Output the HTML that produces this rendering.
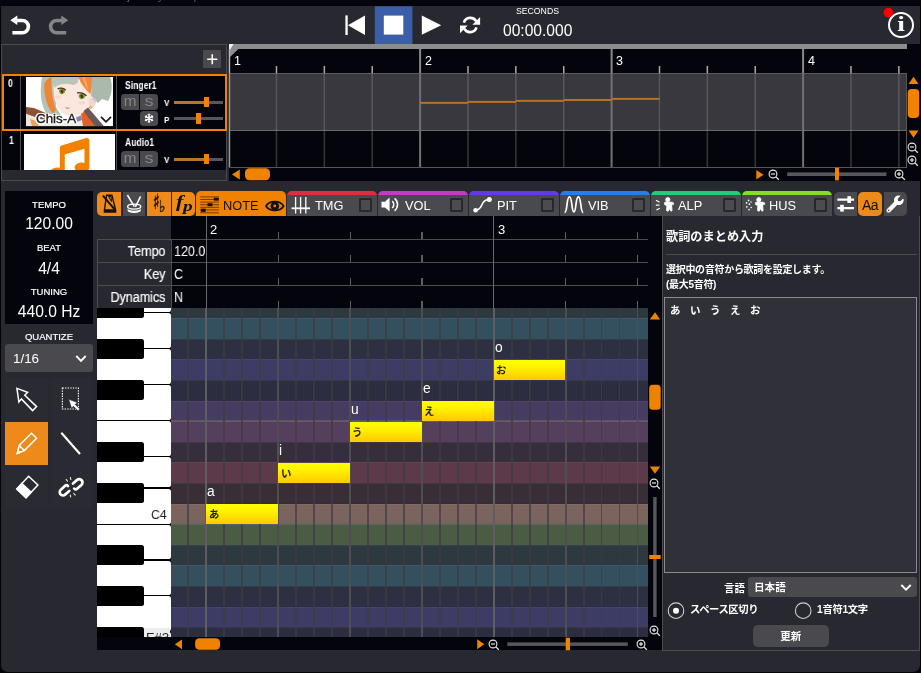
<!DOCTYPE html>
<html lang="ja"><head><meta charset="utf-8"><title>VoiSona</title><style>
*{box-sizing:border-box;margin:0;padding:0}
html,body{width:921px;height:673px;overflow:hidden;background:#030308;}
body{font-family:"Liberation Sans","Noto Sans CJK JP",sans-serif;color:#fff;position:relative}
.a{position:absolute}
.jp{font-family:"Liberation Sans","Noto Sans CJK JP",sans-serif;font-weight:700}
#win{left:1px;top:0;width:919px;height:671.5px;background:#282830;border-radius:0 0 7px 7px;overflow:hidden}
.t{position:absolute;white-space:nowrap;line-height:1;will-change:transform}
svg{position:absolute;overflow:visible}
</style></head><body>
<div id="win" class="a"></div>
<div class="a" style="left:0px;top:0px;width:921px;height:5.8px;background:#04040c;"></div>
<div class="t " style="left:14px;top:-9.5px;font-size:11.5px;color:#5a5a62;">VoiSona - Untitled Project - lyrics input</div>
<svg class="a" style="left:0;top:0" width="921" height="50" viewBox="0 0 921 50"><path d="M16,20.5 L22.3,20.5 A6.1,6.1 0 0 1 22.3,32.7 L12.4,32.7" fill="none" stroke="#fff" stroke-width="3.6"/><path d="M10.3,20.3 L17.3,15.4 L17.3,25 Z" fill="#fff"/><path d="M62.5,20.5 L56.7,20.5 A6.1,6.1 0 0 0 56.7,32.7 L66.2,32.7" fill="none" stroke="#858588" stroke-width="3.6"/><path d="M68.3,20.3 L61.3,15.4 L61.3,25 Z" fill="#858588"/><rect x="345.4" y="15.4" width="2.3" height="19.6" fill="#fff"/><path d="M365,15.4 L365,35 L347.9,25.2 Z" fill="#fff"/><rect x="374.8" y="6.3" width="37.6" height="37.9" fill="#3b5ea9"/><rect x="383.8" y="15.6" width="19.5" height="19" fill="#fff"/><path d="M421.8,15.5 L421.8,34.8 L441.2,25.2 Z" fill="#fff"/><g fill="none" stroke="#fff" stroke-width="2.6"><path d="M463.9,22.6 A6.7,6.7 0 0 1 476.2,21.4"/><path d="M476.5,27.4 A6.7,6.7 0 0 1 464.2,28.6"/></g><path d="M480.1,17 L480.1,24.8 L472.4,24.8 Z" fill="#fff"/><path d="M460,33.2 L460,25.4 L467.7,25.4 Z" fill="#fff"/><circle cx="901" cy="25" r="12" fill="none" stroke="#fff" stroke-width="2"/><circle cx="888.3" cy="12.6" r="4.8" fill="#f00"/></svg>
<div class="t " style="left:516px;top:6.6px;font-size:8.7px;color:#fff;">SECONDS</div>
<div class="t" style="left:891px;width:20px;text-align:center;top:13.9px;font-size:21.5px;font-weight:700;color:#fff;font-family:'Liberation Serif',serif;transform:scaleX(1.28)">i</div>
<div class="t " style="left:503px;top:22.8px;font-size:15.6px;color:#fff;">00:00.000</div>
<div class="a" style="left:1px;top:44.3px;width:226px;height:136.9px;background:#282830;border:1.2px solid #4a4a4e"></div>
<div class="a" style="left:202.5px;top:49.5px;width:18.5px;height:18.5px;background:#4a4a4e;"></div>
<svg class="a" style="left:202.5px;top:49.5px" width="18.5" height="18.5"><path d="M9.25,4.2 V14.3 M4.2,9.25 H14.3" stroke="#fff" stroke-width="1.6"/></svg>
<div class="a" style="left:2px;top:74px;width:224.5px;height:56.5px;background:#04040c;border:2px solid #f08200"></div>
<div class="a" style="left:20.3px;top:76px;width:1px;height:52.5px;background:#505054;"></div>
<div class="a" style="left:116.3px;top:76px;width:1px;height:52.5px;background:#505054;"></div>
<div class="t jp" style="left:8.4px;top:78.8px;font-size:10px;color:#fff;font-weight:700;transform:scaleX(0.86);transform-origin:0 0">0</div>
<svg class="a" style="left:26px;top:77px" width="87" height="49.3" viewBox="0 0 87 49.3">
<defs><clipPath id="pc"><rect x="0" y="0" width="87" height="49.3"/></clipPath>
<filter id="bl" x="-5%" y="-5%" width="110%" height="110%"><feGaussianBlur stdDeviation="0.45"/></filter></defs>
<g clip-path="url(#pc)"><rect width="87" height="49.3" fill="#fff"/>
<g filter="url(#bl)">
<path d="M16,0 L30,0 L30,30 L36,40 L20,36 C14,26 14,12 16,0 Z" fill="#b3c2b5"/>
<path d="M0,30 L8,31 L22,37 L30,43 L20,44 L0,37 Z" fill="#8a5236"/>
<path d="M0,37 L20,44 L30,43 L40,49.3 L0,49.3 Z" fill="#ece6de"/>
<path d="M4,42 L14,45 L12,49.3 L6,49.3 Z" fill="#f0a060"/>
<path d="M65,0 L84,0 C87,8 86,18 82,24 L76,22 L72,26 L64,18 Z" fill="#aab9ac"/>
<path d="M27,4 C34,2 58,2 65,8 C66,16 65,24 62,30 C56,38 50,42 45,41 C38,39 30,30 28,20 Z" fill="#fbe7de"/>
<path d="M18.5,6 C20,3 23,1 25.5,0 C25,10 26,22 30,33 L27,37 C20,28 17.5,16 18.5,6 Z" fill="#f08434"/>
<path d="M26,0 L53,0 L52,5 C50,8 47,8.5 45,7.5 C40,6 33,7 28.5,10.5 C27,8 26,4 26,0 Z" fill="#b9c7ba"/>
<path d="M52,0 L66,0 C66,6 65.5,12 64.5,17.5 C60,13 55,7 52,0 Z" fill="#f28a3e"/>
<path d="M56,0 L59,0 L62,12 L60,10 Z" fill="#f6a868"/>
<path d="M62.5,23 C64,19.5 69,20 70,23.5 C70.5,27 68,31 65,31.5 C63.5,30 62.5,26 62.5,23 Z" fill="#f5d6ca"/>
<path d="M67,20.5 L70.5,22.5 L69.5,25 L66.5,23 Z" fill="#cdbfe0"/>
<circle cx="64.3" cy="30.2" r="1.5" fill="#e8893a"/><circle cx="64.3" cy="30.2" r="0.6" fill="#fff"/>
<ellipse cx="36" cy="14.3" rx="2.9" ry="2.8" fill="#7e9a1c" transform="rotate(-25 36 14.3)"/>
<ellipse cx="55.8" cy="19.2" rx="3" ry="2.9" fill="#7e9a1c" transform="rotate(-25 55.8 19.2)"/>
<ellipse cx="36" cy="14.4" rx="1.2" ry="1.8" fill="#2c3a08" transform="rotate(-20 36 14.4)"/>
<ellipse cx="55.8" cy="19.3" rx="1.3" ry="1.9" fill="#2c3a08" transform="rotate(-20 55.8 19.3)"/>
<path d="M31.6,12 C34,10.6 37.6,11 39.8,13.2" stroke="#4e362a" stroke-width="1.4" fill="none"/>
<path d="M51.2,16 C54.4,15 58.4,16.4 60.4,19" stroke="#4e362a" stroke-width="1.4" fill="none"/>
<path d="M39.6,30.3 C40.8,31.4 42.4,31.5 43.4,30.8" stroke="#d68c84" stroke-width="1.2" fill="none"/>
<ellipse cx="32" cy="20" rx="3" ry="1.6" fill="#f8cfc6" opacity="0.7"/><ellipse cx="56" cy="26" rx="3.2" ry="1.7" fill="#f8cfc6" opacity="0.7"/>
<path d="M40,41 L47,40.5 L54,36 L58,38 L62,49.3 L36,49.3 Z" fill="#f3ece6"/>
<path d="M49,41 L55,38.5 L56,43 L51,45 Z" fill="#8088b0"/>
<path d="M55,37 L60,33 L70,49.3 L57,49.3 Z" fill="#e4602a"/>
<path d="M57.5,34 L62,30.5 L78,49.3 L69,49.3 Z" fill="#6a5a56"/>
</g></g></svg>
<div class="t" style="left:35.9px;top:112.3px;font-size:13.4px;color:#1c1c1c;-webkit-text-stroke:0.35px #1c1c1c;text-shadow:-1.2px -1.2px 0 #fff,1.2px -1.2px 0 #fff,-1.2px 1.2px 0 #fff,1.2px 1.2px 0 #fff,0 1.5px 0 #fff,0 -1.5px 0 #fff,1.5px 0 0 #fff,-1.5px 0 0 #fff,0 0 2px #fff">Chis-A</div>
<svg class="a" style="left:100px;top:115px" width="12" height="9"><path d="M1,1.8 L6,6.8 L11,1.8" fill="none" stroke="#fff" stroke-width="3.4"/><path d="M1,1.8 L6,6.8 L11,1.8" fill="none" stroke="#1c1c1c" stroke-width="1.8"/></svg>
<div class="t jp" style="left:125px;top:80.8px;font-size:10px;color:#fff;font-weight:700;transform:scaleX(0.86);transform-origin:0 0">Singer1</div>
<div class="a" style="left:121.2px;top:94.4px;width:18.2px;height:15.4px;background:#4a4a4e;border-radius:3.5px 0 0 3.5px"></div>
<div class="a" style="left:140.3px;top:94.4px;width:17.9px;height:15.4px;background:#4a4a4e;border-radius:0 3.5px 3.5px 0"></div>
<div class="t" style="left:121.2px;width:18.2px;text-align:center;top:94.3px;font-size:14.5px;color:#85858a;transform:scaleX(1.05)">m</div>
<div class="t" style="left:140.3px;width:17.9px;text-align:center;top:94.3px;font-size:14.5px;color:#85858a;transform:scaleX(1.25)">s</div>
<div class="t jp" style="left:163.6px;top:98.2px;font-size:9.5px;color:#fff;font-weight:700;transform:scaleX(0.86);transform-origin:0 0">V</div>
<div class="a" style="left:174px;top:100.7px;width:32px;height:3px;background:#b4762a;"></div>
<div class="a" style="left:206px;top:100.7px;width:17px;height:3px;background:#58585c;"></div>
<div class="a" style="left:204.1px;top:96.9px;width:4.8px;height:10.4px;background:#f08200;"></div>
<div class="a" style="left:140.2px;top:111.2px;width:18px;height:14.5px;background:#4a4a4e;border-radius:3.5px"></div>
<svg class="a" style="left:140.2px;top:111.2px" width="18" height="14.5"><g stroke="#fff" stroke-width="1.5" stroke-linecap="round"><path d="M9,3.3 V11.3 M5.5,5.3 L12.5,9.3 M5.5,9.3 L12.5,5.3"/></g><g stroke="#fff" stroke-width="0.9" fill="none"><path d="M7.8,3.4 L9,4.6 L10.2,3.4 M7.8,11.2 L9,10 L10.2,11.2 M5,6.6 L6.7,6 L6.4,4.3 M13,8 L11.3,8.6 L11.6,10.3 M5,8 L6.7,8.6 L6.4,10.3 M13,6.6 L11.3,6 L11.6,4.3"/></g></svg>
<div class="t jp" style="left:163.6px;top:114.7px;font-size:9.5px;color:#fff;font-weight:700;transform:scaleX(0.86);transform-origin:0 0">P</div>
<div class="a" style="left:174px;top:117.3px;width:49px;height:3px;background:#58585c;"></div>
<div class="a" style="left:196.2px;top:113.4px;width:4.8px;height:10.3px;background:#f08200;"></div>
<div class="a" style="left:2px;top:131px;width:224px;height:38.7px;background:#04040c;"></div>
<div class="a" style="left:20.3px;top:131px;width:1px;height:38.7px;background:#505054;"></div>
<div class="a" style="left:116.3px;top:131px;width:1px;height:38.7px;background:#505054;"></div>
<div class="t jp" style="left:8.6px;top:136.2px;font-size:10px;color:#fff;font-weight:700;transform:scaleX(0.86);transform-origin:0 0">1</div>
<div class="a" style="left:23.8px;top:133.8px;width:91.3px;height:35.9px;background:#fff;overflow:hidden"><svg style="left:26.4px;top:4.6px" width="39.4" height="39.4" viewBox="0 0 512 512"><path fill="#f08200" d="M470.38 1.51L150.41 96A32 32 0 0 0 128 126.51v261.41A139 139 0 0 0 96 384c-53 0-96 28.66-96 64s43 64 96 64 96-28.66 96-64V214.32l256-75v184.61a138.4 138.4 0 0 0-32-3.93c-53 0-96 28.66-96 64s43 64 96 64 96-28.65 96-64V32a32 32 0 0 0-41.62-30.49z"/></svg></div>
<div class="t jp" style="left:125px;top:137.8px;font-size:10px;color:#fff;font-weight:700;transform:scaleX(0.86);transform-origin:0 0">Audio1</div>
<div class="a" style="left:121.2px;top:151.4px;width:18.2px;height:15.4px;background:#4a4a4e;border-radius:3.5px 0 0 3.5px"></div>
<div class="a" style="left:140.3px;top:151.4px;width:17.9px;height:15.4px;background:#4a4a4e;border-radius:0 3.5px 3.5px 0"></div>
<div class="t" style="left:121.2px;width:18.2px;text-align:center;top:151.3px;font-size:14.5px;color:#85858a;transform:scaleX(1.05)">m</div>
<div class="t" style="left:140.3px;width:17.9px;text-align:center;top:151.3px;font-size:14.5px;color:#85858a;transform:scaleX(1.25)">s</div>
<div class="t jp" style="left:163.6px;top:155.2px;font-size:9.5px;color:#fff;font-weight:700;transform:scaleX(0.86);transform-origin:0 0">V</div>
<div class="a" style="left:174px;top:157.7px;width:32px;height:3px;background:#b4762a;"></div>
<div class="a" style="left:206px;top:157.7px;width:17px;height:3px;background:#58585c;"></div>
<div class="a" style="left:204.1px;top:153.9px;width:4.8px;height:10.4px;background:#f08200;"></div>
<div class="a" style="left:229px;top:44.3px;width:691px;height:136.9px;background:#04040c;"></div>
<div class="a" style="left:229px;top:44.3px;width:678px;height:4.8px;background:#8c8c8c;"></div>
<svg class="a" style="left:229px;top:44px" width="10" height="14"><path d="M0,5 L9.5,5 L0,14 Z" fill="#8c8c8c"/><path d="M0,0 L4.6,0 L0,7.6 Z" fill="#f0f0f0"/></svg>
<div class="a" style="left:229px;top:73px;width:678px;height:57.5px;background:#38383e;"></div>
<div class="a" style="left:229px;top:73px;width:678px;height:1px;background:#5c5c60;"></div>
<div class="a" style="left:229px;top:130px;width:678px;height:1px;background:#6a6a6e;"></div>
<div class="a" style="left:229px;top:166.5px;width:678px;height:1px;background:#55555a;"></div>
<div class="a" style="left:906.3px;top:73px;width:1px;height:94px;background:#55555a;"></div>
<div class="t " style="left:233.6px;top:54.8px;font-size:12.5px;color:#fff;">1</div>
<div class="t " style="left:424.70000000000005px;top:54.8px;font-size:12.5px;color:#fff;">2</div>
<div class="t " style="left:616.2px;top:54.8px;font-size:12.5px;color:#fff;">3</div>
<div class="t " style="left:807.7px;top:54.8px;font-size:12.5px;color:#fff;">4</div>
<svg class="a" style="left:0;top:0" width="921" height="182" viewBox="0 0 921 182"><rect x="228.8" y="49" width="1.4" height="24" fill="#b8b8b8"/><rect x="228.8" y="73" width="1.4" height="94" fill="#9a9a9e"/><rect x="275.73" y="73" width="1.5" height="94" fill="rgba(150,150,150,0.34)"/><rect x="275.73" y="66" width="1.5" height="7" fill="#aaaaaa"/><rect x="323.60" y="73" width="1.5" height="94" fill="rgba(150,150,150,0.34)"/><rect x="323.60" y="66" width="1.5" height="7" fill="#aaaaaa"/><rect x="371.48" y="73" width="1.5" height="94" fill="rgba(150,150,150,0.34)"/><rect x="371.48" y="66" width="1.5" height="7" fill="#aaaaaa"/><rect x="419.10" y="49" width="2" height="24" fill="#88888c"/><rect x="419.10" y="73" width="2" height="94" fill="#717175"/><rect x="467.23" y="73" width="1.5" height="94" fill="rgba(150,150,150,0.34)"/><rect x="467.23" y="66" width="1.5" height="7" fill="#aaaaaa"/><rect x="515.10" y="73" width="1.5" height="94" fill="rgba(150,150,150,0.34)"/><rect x="515.10" y="66" width="1.5" height="7" fill="#aaaaaa"/><rect x="562.98" y="73" width="1.5" height="94" fill="rgba(150,150,150,0.34)"/><rect x="562.98" y="66" width="1.5" height="7" fill="#aaaaaa"/><rect x="610.60" y="49" width="2" height="24" fill="#88888c"/><rect x="610.60" y="73" width="2" height="94" fill="#717175"/><rect x="658.73" y="73" width="1.5" height="94" fill="rgba(150,150,150,0.34)"/><rect x="658.73" y="66" width="1.5" height="7" fill="#aaaaaa"/><rect x="706.60" y="73" width="1.5" height="94" fill="rgba(150,150,150,0.34)"/><rect x="706.60" y="66" width="1.5" height="7" fill="#aaaaaa"/><rect x="754.48" y="73" width="1.5" height="94" fill="rgba(150,150,150,0.34)"/><rect x="754.48" y="66" width="1.5" height="7" fill="#aaaaaa"/><rect x="802.10" y="49" width="2" height="24" fill="#88888c"/><rect x="802.10" y="73" width="2" height="94" fill="#717175"/><rect x="850.23" y="73" width="1.5" height="94" fill="rgba(150,150,150,0.34)"/><rect x="850.23" y="66" width="1.5" height="7" fill="#aaaaaa"/><rect x="898.10" y="73" width="1.5" height="94" fill="rgba(150,150,150,0.34)"/><rect x="898.10" y="66" width="1.5" height="7" fill="#aaaaaa"/><rect x="420.1" y="101.85" width="47.9" height="2" fill="#b97222"/><rect x="468" y="100.90" width="47.9" height="2" fill="#b97222"/><rect x="515.85" y="99.85" width="47.9" height="2" fill="#b97222"/><rect x="563.7" y="99.00" width="47.9" height="2" fill="#b97222"/><rect x="611.6" y="97.90" width="47.9" height="2" fill="#b97222"/></svg>
<svg class="a" style="left:907px;top:70px" width="14" height="100"><path d="M1.6,14 L11.5,14 L6.5,6.7 Z" fill="#f08200"/><rect x="0.7" y="19" width="11.5" height="29" rx="4" fill="#f08200"/><path d="M1.6,60.4 L11.5,60.4 L6.5,67.7 Z" fill="#f08200"/></svg>
<svg class="a" style="left:906.3px;top:140.7px" width="14" height="14"><circle cx="6" cy="6" r="3.9" fill="none" stroke="#e8e8e8" stroke-width="1.1"/><path d="M8.9,8.9 L11.8,11.8" stroke="#e8e8e8" stroke-width="1.3"/><path d="M4,6 H8" stroke="#e8e8e8" stroke-width="1.2"/></svg>
<svg class="a" style="left:906.3px;top:154.4px" width="14" height="14"><circle cx="6" cy="6" r="3.9" fill="none" stroke="#e8e8e8" stroke-width="1.1"/><path d="M8.9,8.9 L11.8,11.8" stroke="#e8e8e8" stroke-width="1.3"/><path d="M4,6 H8" stroke="#e8e8e8" stroke-width="1.2"/><path d="M6,4 V8" stroke="#e8e8e8" stroke-width="1.2"/></svg>
<svg class="a" style="left:229px;top:167px" width="692" height="14"><path d="M10.8,2.5 L10.8,12.5 L3,7.5 Z" fill="#f08200"/><rect x="16" y="1.3" width="25" height="12" rx="4.5" fill="#f08200"/><path d="M527.3,3 L527.3,12.5 L534.6,7.7 Z" fill="#f08200"/><rect x="558.2" y="5.4" width="99.2" height="3.6" fill="#58585c"/><rect x="606" y="0.8" width="4" height="12.6" fill="#f08200"/></svg>
<svg class="a" style="left:766.8px;top:167.5px" width="14" height="14"><circle cx="6" cy="6" r="3.9" fill="none" stroke="#e8e8e8" stroke-width="1.1"/><path d="M8.9,8.9 L11.8,11.8" stroke="#e8e8e8" stroke-width="1.3"/><path d="M4,6 H8" stroke="#e8e8e8" stroke-width="1.2"/></svg>
<svg class="a" style="left:892.6px;top:167.5px" width="14" height="14"><circle cx="6" cy="6" r="3.9" fill="none" stroke="#e8e8e8" stroke-width="1.1"/><path d="M8.9,8.9 L11.8,11.8" stroke="#e8e8e8" stroke-width="1.3"/><path d="M4,6 H8" stroke="#e8e8e8" stroke-width="1.2"/><path d="M6,4 V8" stroke="#e8e8e8" stroke-width="1.2"/></svg>
<div class="a" style="left:5px;top:191.3px;width:88px;height:132.3px;background:#04040c;"></div>
<div class="t " style="left:-51px;width:200px;text-align:center;top:199.8px;font-size:9.5px;color:#fff;-webkit-text-stroke:0.2px #fff">TEMPO</div>
<div class="t " style="left:-50.7px;width:200px;text-align:center;top:216px;font-size:15.6px;color:#fff;">120.00</div>
<div class="t " style="left:-51px;width:200px;text-align:center;top:243.4px;font-size:9.5px;color:#fff;-webkit-text-stroke:0.2px #fff">BEAT</div>
<div class="t " style="left:-51px;width:200px;text-align:center;top:261px;font-size:15.6px;color:#fff;">4/4</div>
<div class="t " style="left:-51px;width:200px;text-align:center;top:287.4px;font-size:9.5px;color:#fff;-webkit-text-stroke:0.2px #fff">TUNING</div>
<div class="t " style="left:-51px;width:200px;text-align:center;top:304px;font-size:15.6px;color:#fff;">440.0 Hz</div>
<div class="t " style="left:-51px;width:200px;text-align:center;top:331.8px;font-size:9.5px;color:#fff;-webkit-text-stroke:0.2px #fff">QUANTIZE</div>
<div class="a" style="left:5px;top:344.4px;width:87.7px;height:27.6px;background:#4a4a4e;border-radius:3px"></div>
<div class="t " style="left:12.5px;top:352px;font-size:13.4px;color:#fff;">1/16</div>
<svg class="a" style="left:75px;top:354px" width="12" height="10"><path d="M1.3,2 L6,6.8 L10.7,2" fill="none" stroke="#fff" stroke-width="1.9"/></svg>
<div class="a" style="left:5.3px;top:378px;width:86.8px;height:130.2px;background:#2a2a32;"></div>
<div class="a" style="left:5.4px;top:421.7px;width:43.1px;height:43.1px;background:#ee8a1a;"></div>
<div class="a" style="left:48.5px;top:378px;width:0.8px;height:130px;background:#26262e;"></div>
<svg class="a" style="left:0;top:370px" width="100" height="145" viewBox="0 0 100 145">
<g fill="none" stroke="#fff" stroke-width="1.5" stroke-linejoin="miter">
<path d="M16.9,18.4 L27.6,22.2 L24.8,25.2 L36.6,36.6 L32.6,40.6 L21.4,28.9 L18.9,32 Z"/>
<path d="M62.4,18 H78.4 V39 H62.4 Z" stroke-dasharray="1.4 1.2" stroke-width="1.2"/>
</g>
<path d="M68.7,29.3 L77.4,32.5 L75.2,34.4 L79.8,39 L78,40.8 L73.4,36.2 L71.6,38.4 Z" fill="#fff" stroke="#282830" stroke-width="0.6"/>
<g fill="none" stroke="#fff" stroke-width="1.5">
<path d="M17.2,83.5 L19.2,75.5 L31.5,63.2 L36.6,68.3 L24.3,80.6 Z"/>
<path d="M19.2,75.5 L24.3,80.6"/>
<path d="M17.2,83.5 L20.5,82.5 L18.3,80.2 Z" fill="#fff" stroke-width="0.8"/>
</g>
<path d="M61.3,62.8 L80,84" stroke="#fff" stroke-width="2.1"/>
<g fill="none" stroke="#fff" stroke-width="1.5">
<path d="M16.8,119 L28.6,106.3 L37.9,115 L26,127.8 Z"/>
</g>
<path d="M16.8,119 L21.9,113.5 L31.2,122.2 L26,127.8 Z" fill="#fff" stroke="#fff" stroke-width="1.5"/>
<g fill="none" stroke="#fff" stroke-width="2.7" stroke-linecap="round">
<path transform="translate(65.4,120) rotate(-42)" d="M4.6,-1.2 Q4.6,-3.3 2.6,-3.3 L-3.2,-3.3 A3.3,3.3 0 0 0 -3.2,3.3 L2.2,3.3"/>
<path transform="translate(76.8,114.6) rotate(-42)" d="M-4.6,1.2 Q-4.6,3.3 -2.6,3.3 L3.2,3.3 A3.3,3.3 0 0 0 3.2,-3.3 L-2.2,-3.3"/>
</g>
<g stroke="#e8e8e8" stroke-width="1.1"><path d="M65.9,109.1 L67.8,111.3 M70.4,107.2 L70.8,110 M70.2,124.7 L70.7,127.4 M73.4,123.1 L75.6,125.3"/></g>
</svg>
<div class="a" style="left:97px;top:191.6px;width:24.2px;height:24.4px;background:#ee8a1a;border-radius:5px 0 0 5px"></div>
<div class="a" style="left:122.6px;top:191.6px;width:22.8px;height:24.4px;background:#4a4a4e;"></div>
<div class="a" style="left:146.8px;top:191.6px;width:24px;height:24.4px;background:#ee8a1a;"></div>
<div class="a" style="left:172px;top:191.6px;width:23.3px;height:24.4px;background:#ee8a1a;border-radius:0 5px 5px 0"></div>
<svg class="a" style="left:95px;top:188px" width="105" height="32" viewBox="0 0 105 32">
<g fill="none" stroke="#111" stroke-width="1.4">
<path d="M11.6,7.2 H16.9 L20.6,22 H9.4 Z"/>
<path d="M7.9,7.6 L19.4,21.2" stroke-width="1.9"/>
<path d="M13.6,8.6 H16 L16.6,13.6 Z" stroke-width="1"/>
</g>
<path d="M9.2,22 H20.8 L21.5,24.8 H8.5 Z" fill="#111"/>
<g stroke="#fff" stroke-width="1.5" fill="none"><path d="M32.4,7 L39.3,18.6 M45.6,8.4 L40.4,18.8"/></g>
<ellipse cx="39.2" cy="18.6" rx="6.6" ry="2.5" fill="none" stroke="#fff" stroke-width="1.3"/>
<path d="M32.6,20.2 V22.4 A6.6,2.5 0 0 0 45.8,22.4 V20.2 A6.6,2.5 0 0 1 32.6,20.2 Z" fill="#fff"/>
</svg>
<div class="t " style="left:152.9px;top:191.6px;font-size:21px;color:#111;font-family:'DejaVu Sans',sans-serif;-webkit-text-stroke:0.5px #111;transform:scaleX(0.66);transform-origin:0 0">♯</div>
<div class="t " style="left:159.2px;top:199.4px;font-size:16.5px;color:#111;font-family:'DejaVu Sans',sans-serif;-webkit-text-stroke:0.4px #111;transform:scaleX(0.85);transform-origin:0 0">♭</div>
<div class="t " style="left:175.6px;top:192.6px;font-size:17px;color:#111;font-family:'Liberation Serif',serif;font-weight:700;transform:scaleX(1.3);transform-origin:0 0"><i>f</i></div>
<div class="t " style="left:182.6px;top:198.8px;font-size:14.8px;color:#111;font-family:'Liberation Serif',serif;font-weight:700;transform:scaleX(1.3);transform-origin:0 0"><i>p</i></div>
<div class="a" style="left:196.2px;top:191.2px;width:90.2px;height:24.8px;background:#f08200;border-radius:5px 5px 0 0"></div>
<svg class="a" style="left:200px;top:196px" width="20" height="18" viewBox="0 0 20 18">
<g stroke="rgba(70,32,0,0.72)" stroke-width="1"><path d="M0.2,0.9 H19 M0.2,3.5 H19 M0.2,6.1 H19 M0.2,8.7 H19 M0.2,11.3 H19 M0.2,13.9 H19 M0.2,16.8 H19"/></g>
<rect x="13.8" y="1.7" width="4.9" height="2.9" fill="#111"/>
<rect x="7.5" y="7.2" width="4.9" height="3" fill="#111"/>
<rect x="0.8" y="12.7" width="4.9" height="3.2" fill="#111"/>
</svg>
<div class="t " style="left:223.2px;top:199.9px;font-size:12.8px;color:#111;">NOTE</div>
<svg class="a" style="left:265px;top:198.6px" width="20" height="14" viewBox="0 0 20 14">
<path d="M1,7 C4.4,1.2 15.2,1.2 18.6,7 C15.2,12.8 4.4,12.8 1,7 Z" fill="none" stroke="#111" stroke-width="1.7"/>
<circle cx="9.8" cy="7" r="4.3" fill="#111"/><circle cx="9.8" cy="7" r="1.4" fill="#f08200"/>
</svg>
<div class="a" style="left:287px;top:191.2px;width:90px;height:24.8px;background:#4a4a4e;border-radius:5px 5px 0 0;overflow:hidden"><div style="height:3.8px;background:#e22c3c"></div></div>
<div class="a" style="left:359px;top:198.4px;width:13.2px;height:13.2px;background:#4c4c50;border:2px solid #28282c;border-radius:1.5px"></div>
<div class="t " style="left:314.6px;top:199.9px;font-size:12.8px;color:#fff;">TMG</div>
<div class="a" style="left:378px;top:191.2px;width:90px;height:24.8px;background:#4a4a4e;border-radius:5px 5px 0 0;overflow:hidden"><div style="height:3.8px;background:#c03cc4"></div></div>
<div class="a" style="left:450px;top:198.4px;width:13.2px;height:13.2px;background:#4c4c50;border:2px solid #28282c;border-radius:1.5px"></div>
<div class="t " style="left:405.2px;top:199.9px;font-size:12.8px;color:#fff;">VOL</div>
<div class="a" style="left:469px;top:191.2px;width:90px;height:24.8px;background:#4a4a4e;border-radius:5px 5px 0 0;overflow:hidden"><div style="height:3.8px;background:#6438f0"></div></div>
<div class="a" style="left:541px;top:198.4px;width:13.2px;height:13.2px;background:#4c4c50;border:2px solid #28282c;border-radius:1.5px"></div>
<div class="t " style="left:496.6px;top:199.9px;font-size:12.8px;color:#fff;">PIT</div>
<div class="a" style="left:560px;top:191.2px;width:90px;height:24.8px;background:#4a4a4e;border-radius:5px 5px 0 0;overflow:hidden"><div style="height:3.8px;background:#2a7ce8"></div></div>
<div class="a" style="left:632px;top:198.4px;width:13.2px;height:13.2px;background:#4c4c50;border:2px solid #28282c;border-radius:1.5px"></div>
<div class="t " style="left:587.6px;top:199.9px;font-size:12.8px;color:#fff;">VIB</div>
<div class="a" style="left:651px;top:191.2px;width:90px;height:24.8px;background:#4a4a4e;border-radius:5px 5px 0 0;overflow:hidden"><div style="height:3.8px;background:#1fce7c"></div></div>
<div class="a" style="left:723px;top:198.4px;width:13.2px;height:13.2px;background:#4c4c50;border:2px solid #28282c;border-radius:1.5px"></div>
<div class="t " style="left:678px;top:199.9px;font-size:12.8px;color:#fff;">ALP</div>
<div class="a" style="left:742px;top:191.2px;width:90px;height:24.8px;background:#4a4a4e;border-radius:5px 5px 0 0;overflow:hidden"><div style="height:3.8px;background:#86de20"></div></div>
<div class="a" style="left:814px;top:198.4px;width:13.2px;height:13.2px;background:#4c4c50;border:2px solid #28282c;border-radius:1.5px"></div>
<div class="t " style="left:769px;top:199.9px;font-size:12.8px;color:#fff;">HUS</div>
<svg class="a" style="left:287px;top:191px" width="560" height="26" viewBox="0 0 560 26">
<g stroke="#fff" stroke-width="1.3" fill="none">
<path d="M8.6,6 V22.4 M13.6,6 V22.4 M18.8,6 V22.4"/><path d="M4.6,17.3 H23" stroke-width="1.8"/>
</g>
<path d="M94.5,10.8 H98 L102.6,6.6 V20.6 L98,16.4 H94.5 Z" fill="#fff"/>
<g stroke="#fff" stroke-width="1.5" fill="none"><path d="M105.2,10.2 A4.4,4.4 0 0 1 105.2,17"/><path d="M107.6,7.4 A8,8 0 0 1 107.6,19.8"/></g>
<g stroke="#fff" stroke-width="1.5" fill="none"><path d="M188.6,19.2 C196.5,19.2 193,8.6 202,8.6"/></g>
<circle cx="188.6" cy="19.2" r="2.3" fill="#fff"/><circle cx="202.3" cy="8.6" r="2.5" fill="#fff"/>
<path d="M277.6,21.6 C280.6,21.6 279.4,5.8 282.4,5.8 C285.4,5.8 284.4,20.8 286.9,20.8 C289.4,20.8 288.4,5.8 291.4,5.8 C294.4,5.8 293.2,21.6 296.2,21.6" fill="none" stroke="#fff" stroke-width="1.7"/>
<g fill="#fff" stroke="#fff" stroke-width="0.9" stroke-linejoin="round" transform="translate(0,0)">
<circle cx="380.8" cy="8.7" r="2.1"/>
<path d="M377.4,12.6 Q377.2,11 379,11 L385.4,11.3 Q387,11.6 386.7,13.2 L384.6,13.9 L385,19.4 Q384.8,20.3 383.8,20.1 L382.5,17.4 L381.3,20.1 Q380.1,20.4 379.6,19.4 L379.9,14.3 L377.9,13.9 Z"/>
</g><g fill="#fff" stroke="#fff" stroke-width="0.9" stroke-linejoin="round" transform="translate(91,0)">
<circle cx="380.8" cy="8.7" r="2.1"/>
<path d="M377.4,12.6 Q377.2,11 379,11 L385.4,11.3 Q387,11.6 386.7,13.2 L384.6,13.9 L385,19.4 Q384.8,20.3 383.8,20.1 L382.5,17.4 L381.3,20.1 Q380.1,20.4 379.6,19.4 L379.9,14.3 L377.9,13.9 Z"/>
</g>
<g stroke="#fff" stroke-width="1.2" fill="none"><path d="M369,9.2 L372.6,11.2 M368.8,14.2 H372.4 M369.4,19 L372.8,17.2"/></g>
<g fill="#fff"><circle cx="461.6" cy="9.4" r="0.85"/><circle cx="459.6" cy="11.8" r="0.85"/><circle cx="462.4" cy="13.2" r="0.85"/><circle cx="459.8" cy="15.8" r="0.85"/><circle cx="462" cy="18.6" r="0.85"/><circle cx="464" cy="11" r="0.75"/><circle cx="464.2" cy="16.4" r="0.75"/></g>
</svg>
<div class="a" style="left:833.6px;top:192px;width:23.6px;height:23.8px;background:#4a4a4e;border-radius:5px 0 0 5px"></div>
<div class="a" style="left:858.4px;top:192px;width:24px;height:23.8px;background:#ee8a1a;border-radius:5px"></div>
<div class="a" style="left:883.6px;top:192px;width:23.2px;height:23.8px;background:#4a4a4e;border-radius:0 5px 5px 0"></div>
<svg class="a" style="left:833px;top:192px" width="75" height="24" viewBox="0 0 75 24">
<g stroke="#fff" stroke-width="2.2"><path d="M4.4,7.6 H21 M4.4,16.2 H21"/></g>
<rect x="14.4" y="4.2" width="3.6" height="6.8" fill="#fff"/><rect x="7.2" y="12.8" width="3.6" height="6.8" fill="#fff"/>
<g transform="translate(53.5,3.4) scale(0.0335)"><path fill="#fff" d="M507.73 109.1c-2.24-9.03-13.54-12.09-20.12-5.51l-74.36 74.36-67.88-11.31-11.31-67.88 74.36-74.36c6.62-6.62 3.43-17.9-5.66-20.16-47.38-11.74-99.55.91-136.58 37.93-39.64 39.64-50.55 97.1-34.05 147.2L18.74 402.76c-24.99 24.99-24.99 65.51 0 90.5 24.99 24.99 65.51 24.99 90.5 0l213.21-213.21c50.12 16.71 107.47 5.68 147.37-34.22 37.07-37.07 49.7-89.32 37.91-136.73zM64 472c-13.25 0-24-10.75-24-24 0-13.26 10.75-24 24-24s24 10.74 24 24c0 13.25-10.75 24-24 24z"/></g>
</svg>
<div class="t " style="left:862.3px;top:197.8px;font-size:14px;color:#111;letter-spacing:-0.5px">Aa</div>
<div class="a" style="left:171px;top:216px;width:491px;height:434.4px;background:#04040c;"></div>
<div class="a" style="left:97px;top:308px;width:74px;height:342.4px;background:#04040c;"></div>
<div class="a" style="left:97px;top:239.3px;width:551.2px;height:1px;background:#4c4c52;"></div>
<div class="a" style="left:97px;top:262.2px;width:551.2px;height:1px;background:#4c4c52;"></div>
<div class="a" style="left:97px;top:285px;width:551.2px;height:1px;background:#4c4c52;"></div>
<div class="a" style="left:97px;top:307.6px;width:551.2px;height:1px;background:#4c4c52;"></div>
<div class="a" style="left:97px;top:239.3px;width:1px;height:69px;background:#4c4c52;"></div>
<div class="a" style="left:170.6px;top:239.3px;width:1px;height:69px;background:#4c4c52;"></div>
<div class="t" style="left:77px;width:88.5px;text-align:right;top:245px;font-size:13.8px;color:#fff;-webkit-text-stroke:0.2px #fff;transform:scaleX(0.91);transform-origin:100% 0">Tempo</div>
<div class="t" style="left:77px;width:88.5px;text-align:right;top:267.8px;font-size:13.8px;color:#fff;-webkit-text-stroke:0.2px #fff;transform:scaleX(0.91);transform-origin:100% 0">Key</div>
<div class="t" style="left:77px;width:88.5px;text-align:right;top:290.6px;font-size:13.8px;color:#fff;-webkit-text-stroke:0.2px #fff;transform:scaleX(0.91);transform-origin:100% 0">Dynamics</div>
<div class="t " style="left:173.6px;top:245px;font-size:13.8px;color:#fff;transform:scaleX(0.91);transform-origin:0 0">120.0</div>
<div class="t " style="left:173.6px;top:267.8px;font-size:13.8px;color:#fff;transform:scaleX(0.91);transform-origin:0 0">C</div>
<div class="t " style="left:173.6px;top:290.6px;font-size:13.8px;color:#fff;transform:scaleX(0.91);transform-origin:0 0">N</div>
<div class="t " style="left:210px;top:223.2px;font-size:13px;color:#fff;">2</div>
<div class="t " style="left:498px;top:223.2px;font-size:13px;color:#fff;">3</div>
<div class="a" style="left:205.7px;top:216px;width:1.4px;height:92px;background:#6a6a6e;"></div>
<div class="a" style="left:277.7px;top:232.4px;width:1.2px;height:7px;background:#5e5e62;"></div>
<div class="a" style="left:277.7px;top:255.4px;width:1.2px;height:7px;background:#5e5e62;"></div>
<div class="a" style="left:277.7px;top:278.2px;width:1.2px;height:7px;background:#5e5e62;"></div>
<div class="a" style="left:277.7px;top:301px;width:1.2px;height:7px;background:#5e5e62;"></div>
<div class="a" style="left:349.5px;top:232.4px;width:1.2px;height:7px;background:#5e5e62;"></div>
<div class="a" style="left:349.5px;top:255.4px;width:1.2px;height:7px;background:#5e5e62;"></div>
<div class="a" style="left:349.5px;top:278.2px;width:1.2px;height:7px;background:#5e5e62;"></div>
<div class="a" style="left:349.5px;top:301px;width:1.2px;height:7px;background:#5e5e62;"></div>
<div class="a" style="left:421.4px;top:232.4px;width:1.2px;height:7px;background:#5e5e62;"></div>
<div class="a" style="left:421.4px;top:255.4px;width:1.2px;height:7px;background:#5e5e62;"></div>
<div class="a" style="left:421.4px;top:278.2px;width:1.2px;height:7px;background:#5e5e62;"></div>
<div class="a" style="left:421.4px;top:301px;width:1.2px;height:7px;background:#5e5e62;"></div>
<div class="a" style="left:493.1px;top:216px;width:1.4px;height:92px;background:#6a6a6e;"></div>
<div class="a" style="left:565.1px;top:232.4px;width:1.2px;height:7px;background:#5e5e62;"></div>
<div class="a" style="left:565.1px;top:255.4px;width:1.2px;height:7px;background:#5e5e62;"></div>
<div class="a" style="left:565.1px;top:278.2px;width:1.2px;height:7px;background:#5e5e62;"></div>
<div class="a" style="left:565.1px;top:301px;width:1.2px;height:7px;background:#5e5e62;"></div>
<div class="a" style="left:637.0px;top:232.4px;width:1.2px;height:7px;background:#5e5e62;"></div>
<div class="a" style="left:637.0px;top:255.4px;width:1.2px;height:7px;background:#5e5e62;"></div>
<div class="a" style="left:637.0px;top:278.2px;width:1.2px;height:7px;background:#5e5e62;"></div>
<div class="a" style="left:637.0px;top:301px;width:1.2px;height:7px;background:#5e5e62;"></div>
<div class="a" style="left:171px;top:308px;width:477.20000000000005px;height:329.3px;overflow:hidden;background:#2c2e40">
<div class="a" style="left:0;top:339.7px;width:100%;height:20.6px;background:#463c62;border-top:1px solid rgba(255,255,255,0.05)"></div>
<div class="a" style="left:0;top:319.1px;width:100%;height:20.6px;background:#2c2e40;border-top:1px solid rgba(255,255,255,0.05)"></div>
<div class="a" style="left:0;top:298.5px;width:100%;height:20.6px;background:#3c3c64;border-top:1px solid rgba(255,255,255,0.05)"></div>
<div class="a" style="left:0;top:277.9px;width:100%;height:20.6px;background:#2c3040;border-top:1px solid rgba(255,255,255,0.05)"></div>
<div class="a" style="left:0;top:257.3px;width:100%;height:20.6px;background:#34505e;border-top:1px solid rgba(255,255,255,0.05)"></div>
<div class="a" style="left:0;top:236.7px;width:100%;height:20.6px;background:#2e383f;border-top:1px solid rgba(255,255,255,0.05)"></div>
<div class="a" style="left:0;top:216.1px;width:100%;height:20.6px;background:#4c5c44;border-top:1px solid rgba(255,255,255,0.05)"></div>
<div class="a" style="left:0;top:195.5px;width:100%;height:20.6px;background:#7c645e;border-top:1px solid rgba(255,255,255,0.05)"></div>
<div class="a" style="left:0;top:174.9px;width:100%;height:20.6px;background:#3a2e36;border-top:1px solid rgba(255,255,255,0.05)"></div>
<div class="a" style="left:0;top:154.3px;width:100%;height:20.6px;background:#5c3a4a;border-top:1px solid rgba(255,255,255,0.05)"></div>
<div class="a" style="left:0;top:133.7px;width:100%;height:20.6px;background:#362e3c;border-top:1px solid rgba(255,255,255,0.05)"></div>
<div class="a" style="left:0;top:113.1px;width:100%;height:20.6px;background:#54405c;border-top:1px solid rgba(255,255,255,0.05)"></div>
<div class="a" style="left:0;top:92.5px;width:100%;height:20.6px;background:#463c62;border-top:1px solid rgba(255,255,255,0.05)"></div>
<div class="a" style="left:0;top:71.9px;width:100%;height:20.6px;background:#2c2e40;border-top:1px solid rgba(255,255,255,0.05)"></div>
<div class="a" style="left:0;top:51.3px;width:100%;height:20.6px;background:#3c3c64;border-top:1px solid rgba(255,255,255,0.05)"></div>
<div class="a" style="left:0;top:30.7px;width:100%;height:20.6px;background:#2c3040;border-top:1px solid rgba(255,255,255,0.05)"></div>
<div class="a" style="left:0;top:10.1px;width:100%;height:20.6px;background:#34505e;border-top:1px solid rgba(255,255,255,0.05)"></div>
<div class="a" style="left:0;top:-10.5px;width:100%;height:20.6px;background:#2e383f;border-top:1px solid rgba(255,255,255,0.05)"></div>
<div class="a" style="left:0;top:359.3px;width:100%;height:2px;background:rgba(100,100,104,0.72)"></div>
<div class="a" style="left:0;top:215.1px;width:100%;height:2px;background:rgba(100,100,104,0.72)"></div>
<div class="a" style="left:0;top:112.1px;width:100%;height:2px;background:rgba(100,100,104,0.72)"></div>
<div class="a" style="left:16.4px;top:0;width:1.9px;height:100%;background:rgba(62,60,66,0.72)"></div>
<div class="a" style="left:34.4px;top:0;width:2px;height:100%;background:#5e5e62"></div>
<div class="a" style="left:52.4px;top:0;width:1.9px;height:100%;background:rgba(62,60,66,0.72)"></div>
<div class="a" style="left:70.3px;top:0;width:1.9px;height:100%;background:rgba(62,60,66,0.72)"></div>
<div class="a" style="left:88.3px;top:0;width:1.9px;height:100%;background:rgba(62,60,66,0.72)"></div>
<div class="a" style="left:106.3px;top:0;width:1.9px;height:100%;background:#4e4e52"></div>
<div class="a" style="left:124.2px;top:0;width:1.9px;height:100%;background:rgba(62,60,66,0.72)"></div>
<div class="a" style="left:142.2px;top:0;width:1.9px;height:100%;background:rgba(62,60,66,0.72)"></div>
<div class="a" style="left:160.2px;top:0;width:1.9px;height:100%;background:rgba(62,60,66,0.72)"></div>
<div class="a" style="left:178.1px;top:0;width:1.9px;height:100%;background:#4e4e52"></div>
<div class="a" style="left:196.1px;top:0;width:1.9px;height:100%;background:rgba(62,60,66,0.72)"></div>
<div class="a" style="left:214.1px;top:0;width:1.9px;height:100%;background:rgba(62,60,66,0.72)"></div>
<div class="a" style="left:232.0px;top:0;width:1.9px;height:100%;background:rgba(62,60,66,0.72)"></div>
<div class="a" style="left:250.0px;top:0;width:1.9px;height:100%;background:#4e4e52"></div>
<div class="a" style="left:267.9px;top:0;width:1.9px;height:100%;background:rgba(62,60,66,0.72)"></div>
<div class="a" style="left:285.9px;top:0;width:1.9px;height:100%;background:rgba(62,60,66,0.72)"></div>
<div class="a" style="left:303.9px;top:0;width:1.9px;height:100%;background:rgba(62,60,66,0.72)"></div>
<div class="a" style="left:321.8px;top:0;width:2px;height:100%;background:#5e5e62"></div>
<div class="a" style="left:339.8px;top:0;width:1.9px;height:100%;background:rgba(62,60,66,0.72)"></div>
<div class="a" style="left:357.8px;top:0;width:1.9px;height:100%;background:rgba(62,60,66,0.72)"></div>
<div class="a" style="left:375.7px;top:0;width:1.9px;height:100%;background:rgba(62,60,66,0.72)"></div>
<div class="a" style="left:393.7px;top:0;width:1.9px;height:100%;background:#4e4e52"></div>
<div class="a" style="left:411.7px;top:0;width:1.9px;height:100%;background:rgba(62,60,66,0.72)"></div>
<div class="a" style="left:429.6px;top:0;width:1.9px;height:100%;background:rgba(62,60,66,0.72)"></div>
<div class="a" style="left:447.6px;top:0;width:1.9px;height:100%;background:rgba(62,60,66,0.72)"></div>
<div class="a" style="left:465.6px;top:0;width:1.9px;height:100%;background:#4e4e52"></div>
<div class="a" style="left:35.4px;top:195.9px;width:71.7px;height:20.400000000000002px;background:linear-gradient(#ffff00 0%,#fff200 35%,#ffc800 100%)"></div>
<div class="t jp" style="left:37.6px;top:202.1px;font-size:10.4px;color:#1c1c1c;font-weight:700">あ</div>
<div class="t" style="left:36.3px;top:176.9px;font-size:13.8px;color:#fff">a</div>
<div class="a" style="left:107.3px;top:154.7px;width:71.7px;height:20.400000000000002px;background:linear-gradient(#ffff00 0%,#fff200 35%,#ffc800 100%)"></div>
<div class="t jp" style="left:109.5px;top:160.9px;font-size:10.4px;color:#1c1c1c;font-weight:700">い</div>
<div class="t" style="left:108.2px;top:135.7px;font-size:13.8px;color:#fff">i</div>
<div class="a" style="left:179.1px;top:113.5px;width:71.7px;height:20.400000000000002px;background:linear-gradient(#ffff00 0%,#fff200 35%,#ffc800 100%)"></div>
<div class="t jp" style="left:181.3px;top:119.7px;font-size:10.4px;color:#1c1c1c;font-weight:700">う</div>
<div class="t" style="left:180.0px;top:94.5px;font-size:13.8px;color:#fff">u</div>
<div class="a" style="left:251.0px;top:92.9px;width:71.7px;height:20.400000000000002px;background:linear-gradient(#ffff00 0%,#fff200 35%,#ffc800 100%)"></div>
<div class="t jp" style="left:253.2px;top:99.1px;font-size:10.4px;color:#1c1c1c;font-weight:700">え</div>
<div class="t" style="left:251.9px;top:73.9px;font-size:13.8px;color:#fff">e</div>
<div class="a" style="left:322.8px;top:51.7px;width:71.7px;height:20.400000000000002px;background:linear-gradient(#ffff00 0%,#fff200 35%,#ffc800 100%)"></div>
<div class="t jp" style="left:325.0px;top:57.9px;font-size:10.4px;color:#1c1c1c;font-weight:700">お</div>
<div class="t" style="left:323.7px;top:32.7px;font-size:13.8px;color:#fff">o</div>
</div>
<div class="a" style="left:97px;top:308px;width:74px;height:329.3px;overflow:hidden;background:#000">
<div class="a" style="left:0;top:-277.55px;width:73.8px;height:34.40px;background:#fff;border-radius:0 2.6px 2.6px 0"></div>
<div class="a" style="left:0;top:-241.85px;width:73.8px;height:34.50px;background:#fff;border-radius:0 2.6px 2.6px 0"></div>
<div class="a" style="left:0;top:-206.05px;width:73.8px;height:34.40px;background:#fff;border-radius:0 2.6px 2.6px 0"></div>
<div class="a" style="left:0;top:-170.35px;width:73.8px;height:35.20px;background:#fff;border-radius:0 2.6px 2.6px 0"></div>
<div class="a" style="left:0;top:-133.85px;width:73.8px;height:34.80px;background:#fff;border-radius:0 2.6px 2.6px 0"></div>
<div class="a" style="left:0;top:-97.75px;width:73.8px;height:30.00px;background:#fff;border-radius:0 2.6px 2.6px 0"></div>
<div class="a" style="left:0;top:-66.45px;width:73.8px;height:34.80px;background:#fff;border-radius:0 2.6px 2.6px 0"></div>
<div class="a" style="left:0;top:-30.35px;width:73.8px;height:34.40px;background:#fff;border-radius:0 2.6px 2.6px 0"></div>
<div class="a" style="left:0;top:5.35px;width:73.8px;height:34.50px;background:#fff;border-radius:0 2.6px 2.6px 0"></div>
<div class="a" style="left:0;top:41.15px;width:73.8px;height:34.40px;background:#fff;border-radius:0 2.6px 2.6px 0"></div>
<div class="a" style="left:0;top:76.85px;width:73.8px;height:35.20px;background:#fff;border-radius:0 2.6px 2.6px 0"></div>
<div class="a" style="left:0;top:113.35px;width:73.8px;height:34.80px;background:#fff;border-radius:0 2.6px 2.6px 0"></div>
<div class="a" style="left:0;top:149.45px;width:73.8px;height:30.00px;background:#fff;border-radius:0 2.6px 2.6px 0"></div>
<div class="a" style="left:0;top:180.75px;width:73.8px;height:34.80px;background:#fff;border-radius:0 2.6px 2.6px 0"></div>
<div class="a" style="left:0;top:216.85px;width:73.8px;height:34.40px;background:#fff;border-radius:0 2.6px 2.6px 0"></div>
<div class="a" style="left:0;top:252.55px;width:73.8px;height:34.50px;background:#fff;border-radius:0 2.6px 2.6px 0"></div>
<div class="a" style="left:0;top:288.35px;width:73.8px;height:34.40px;background:#fff;border-radius:0 2.6px 2.6px 0"></div>
<div class="a" style="left:0;top:324.05px;width:73.8px;height:35.20px;background:#fff;border-radius:0 2.6px 2.6px 0"></div>
<div class="a" style="left:0;top:360.55px;width:73.8px;height:34.80px;background:#fff;border-radius:0 2.6px 2.6px 0"></div>
<div class="a" style="left:0;top:396.65px;width:73.8px;height:30.00px;background:#fff;border-radius:0 2.6px 2.6px 0"></div>
<div class="a" style="left:0;top:427.95px;width:73.8px;height:34.80px;background:#fff;border-radius:0 2.6px 2.6px 0"></div>
<div class="a" style="left:0;top:319.1px;width:47px;height:20.0px;background:#000;border-radius:0 2.5px 2.5px 0"></div>
<div class="a" style="left:0;top:277.9px;width:47px;height:20.0px;background:#000;border-radius:0 2.5px 2.5px 0"></div>
<div class="a" style="left:0;top:236.7px;width:47px;height:20.0px;background:#000;border-radius:0 2.5px 2.5px 0"></div>
<div class="a" style="left:0;top:174.9px;width:47px;height:20.0px;background:#000;border-radius:0 2.5px 2.5px 0"></div>
<div class="a" style="left:0;top:133.7px;width:47px;height:20.0px;background:#000;border-radius:0 2.5px 2.5px 0"></div>
<div class="a" style="left:0;top:71.9px;width:47px;height:20.0px;background:#000;border-radius:0 2.5px 2.5px 0"></div>
<div class="a" style="left:0;top:30.7px;width:47px;height:20.0px;background:#000;border-radius:0 2.5px 2.5px 0"></div>
<div class="a" style="left:0;top:-10.5px;width:47px;height:20.0px;background:#000;border-radius:0 2.5px 2.5px 0"></div>
<div class="t" style="left:53.6px;top:199.9px;font-size:13.2px;color:#222;transform:scaleX(0.93);transform-origin:0 0">C4</div>
<div class="a" style="left:47.2px;top:319.7px;width:26px;height:20px;background:#ececec"></div>
<div class="t" style="left:48.5px;top:322.5px;font-size:13.5px;color:#222">F#3</div>
</div>
<svg class="a" style="left:648px;top:308px" width="14" height="330" viewBox="0 0 14 330"><path d="M1.8,11.4 L12.2,11.4 L7,4.2 Z" fill="#f08200"/><rect x="1.2" y="76.8" width="11.5" height="25" rx="3.5" fill="#f08200"/><path d="M1.8,158.4 L12.2,158.4 L7,165.8 Z" fill="#f08200"/><rect x="5.2" y="189" width="3.4" height="120" fill="#58585c"/><rect x="1.2" y="247" width="11.5" height="4" fill="#f08200"/></svg>
<svg class="a" style="left:648.2px;top:477px" width="14" height="14"><circle cx="6" cy="6" r="3.9" fill="none" stroke="#e8e8e8" stroke-width="1.1"/><path d="M8.9,8.9 L11.8,11.8" stroke="#e8e8e8" stroke-width="1.3"/><path d="M4,6 H8" stroke="#e8e8e8" stroke-width="1.2"/></svg>
<svg class="a" style="left:648.2px;top:624.2px" width="14" height="14"><circle cx="6" cy="6" r="3.9" fill="none" stroke="#e8e8e8" stroke-width="1.1"/><path d="M8.9,8.9 L11.8,11.8" stroke="#e8e8e8" stroke-width="1.3"/><path d="M4,6 H8" stroke="#e8e8e8" stroke-width="1.2"/><path d="M6,4 V8" stroke="#e8e8e8" stroke-width="1.2"/></svg>
<svg class="a" style="left:171px;top:637px" width="480" height="14" viewBox="0 0 480 14"><path d="M11,2.4 L11,12.2 L3.8,7.3 Z" fill="#f08200"/><rect x="24.1" y="1.2" width="25" height="11.6" rx="4.2" fill="#f08200"/><path d="M306.2,2.2 L306.2,12.2 L313.2,7.2 Z" fill="#f08200"/><rect x="336.3" y="5.4" width="120.5" height="3.5" fill="#58585c"/><rect x="394.7" y="0.7" width="4.3" height="12.6" fill="#f08200"/></svg>
<svg class="a" style="left:487.4px;top:637.7px" width="14" height="14"><circle cx="6" cy="6" r="3.9" fill="none" stroke="#e8e8e8" stroke-width="1.1"/><path d="M8.9,8.9 L11.8,11.8" stroke="#e8e8e8" stroke-width="1.3"/><path d="M4,6 H8" stroke="#e8e8e8" stroke-width="1.2"/></svg>
<svg class="a" style="left:634.8px;top:637.7px" width="14" height="14"><circle cx="6" cy="6" r="3.9" fill="none" stroke="#e8e8e8" stroke-width="1.1"/><path d="M8.9,8.9 L11.8,11.8" stroke="#e8e8e8" stroke-width="1.3"/><path d="M4,6 H8" stroke="#e8e8e8" stroke-width="1.2"/><path d="M6,4 V8" stroke="#e8e8e8" stroke-width="1.2"/></svg>
<div class="a" style="left:662px;top:216px;width:258px;height:434.6px;background:#282830;border:1px solid #4c4c52;border-top:none"></div>
<div class="t jp" style="left:666.3px;top:231.4px;font-size:12.2px;color:#fff;">歌詞のまとめ入力</div>
<div class="a" style="left:666px;top:254.3px;width:251px;height:1px;background:#4c4c52;"></div>
<div class="t jp" style="left:666.3px;top:264.6px;font-size:10px;color:#fff;letter-spacing:-0.3px">選択中の音符から歌詞を設定します。</div>
<div class="t jp" style="left:666.3px;top:279.6px;font-size:10px;color:#fff;letter-spacing:-0.3px">(最大5音符)</div>
<div class="a" style="left:664.4px;top:297.2px;width:252.8px;height:275.6px;background:#303038;border:1px solid #8a8a90"></div>
<div class="t jp" style="left:669.8px;top:305.2px;font-size:10.5px;color:#fff;letter-spacing:0.6px;word-spacing:5.4px">あ い う え お</div>
<div class="t jp" style="left:724px;top:582.6px;font-size:10.5px;color:#fff;">言語</div>
<div class="a" style="left:747.7px;top:577px;width:169.4px;height:20px;background:#4a4a4e;border-radius:3px"></div>
<div class="t jp" style="left:754.4px;top:582px;font-size:10.6px;color:#fff;">日本語</div>
<svg class="a" style="left:899.5px;top:582.6px" width="12" height="10"><path d="M1.3,2 L6,6.6 L10.7,2" fill="none" stroke="#fff" stroke-width="2"/></svg>
<svg class="a" style="left:666px;top:600px" width="160" height="22"><circle cx="10" cy="10.7" r="7.8" fill="none" stroke="#d0d0d0" stroke-width="1.1"/><circle cx="10" cy="10.7" r="3" fill="#fff"/><circle cx="137.2" cy="10.7" r="7.8" fill="none" stroke="#d0d0d0" stroke-width="1.1"/></svg>
<div class="t jp" style="left:690.3px;top:605.3px;font-size:10.3px;color:#fff;letter-spacing:-0.4px">スペース区切り</div>
<div class="t jp" style="left:817px;top:605.3px;font-size:10.3px;color:#fff;letter-spacing:-0.3px">1音符1文字</div>
<div class="a" style="left:753px;top:624.6px;width:75.6px;height:22.8px;background:#4a4a4e;border-radius:5px"></div>
<div class="t jp" style="left:753px;width:75.6px;text-align:center;top:630.6px;font-size:10.5px;color:#fff">更新</div>
</body></html>
